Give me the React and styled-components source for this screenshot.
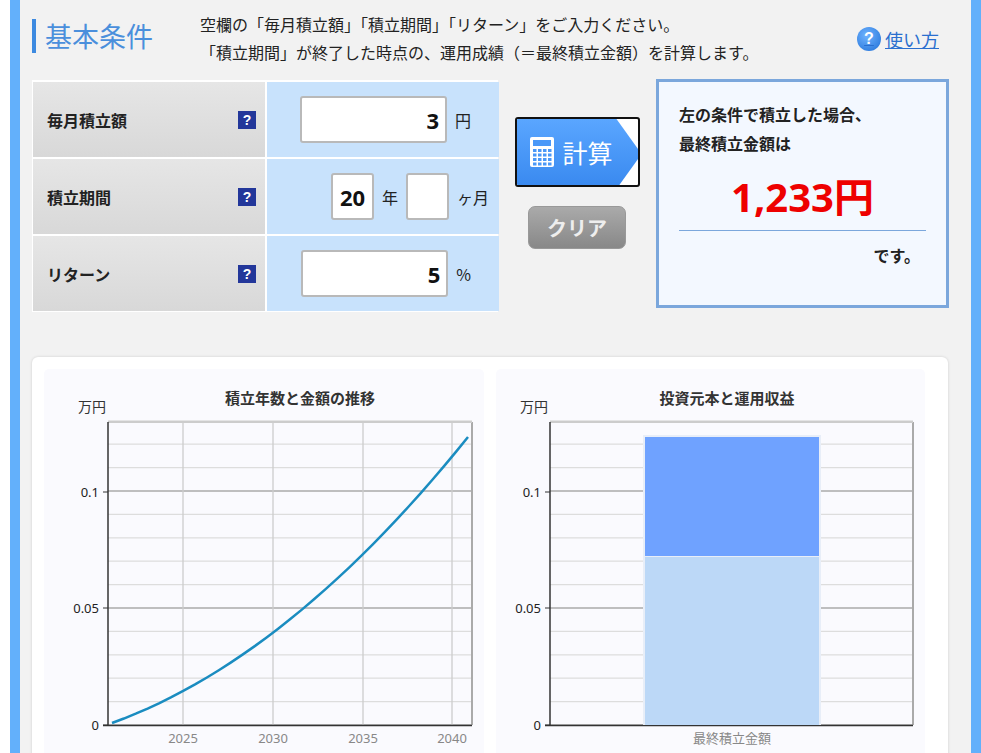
import React from "react";
import styled, { createGlobalStyle } from "styled-components";

const G = createGlobalStyle`
  html,body{margin:0;padding:0;background:#fff;}
  body{font-family:"Noto Sans CJK JP","Noto Sans",sans-serif;color:#222;}
`;
const Outer = styled.div`
  width:981px;height:753px;overflow:hidden;display:flex;background:#fff;
`;
const Page = styled.div`
  margin-left:10px;width:932px;border-left:10px solid #63b0fb;border-right:10px solid #63b0fb;
  background:#f2f2f2;padding:0 14px 0 12px;box-sizing:content-box;height:753px;
`;
const Head = styled.div`display:flex;align-items:flex-start;padding-top:10px;height:80px;box-sizing:border-box;`;
const Title = styled.h1`
  margin:9px 0 0;border-left:4px solid #3d8ae0;padding-left:9px;height:34px;line-height:34px;
  font-size:27px;font-weight:400;color:#4a8fdc;width:155px;
`;
const Desc = styled.div`font-size:16px;line-height:28px;color:#222;flex:1;`;
const Help = styled.a`
  margin-top:16px;margin-right:18px;display:flex;align-items:center;gap:4px;color:#2a6fcf;text-decoration:underline;font-size:18px;
`;
const HelpIcon = styled.span`
  width:24px;height:24px;border-radius:50%;background:radial-gradient(circle at 40% 35%,#6fb3ff,#1f6fd6);
  color:#fff;font-weight:700;font-size:16px;display:flex;align-items:center;justify-content:center;font-family:"Liberation Sans",sans-serif;
`;
const Top = styled.div`display:flex;align-items:flex-start;height:277px;`;
const Table = styled.div`
  width:466px;display:grid;grid-template-columns:232px 232px;gap:2px;background:#fff;padding:2px 1px 3px 1px;box-sizing:border-box;height:232px;
`;
const Label = styled.div`
  background:linear-gradient(#e6e6e6,#d8d8d8);display:flex;align-items:center;justify-content:space-between;
  padding:0 9px 0 14px;font-weight:700;font-size:16px;height:75px;
`;
const Q = styled.span`
  width:18px;height:18px;background:#23379a;color:#fff;font-size:14px;font-weight:700;display:flex;align-items:center;justify-content:center;
  font-family:"Liberation Sans",sans-serif;
`;
const Value = styled.div`
  background:#c8e2fc;display:flex;align-items:center;justify-content:flex-end;gap:8px;font-size:16px;height:75px;
  padding-right:${p=>p.pr||28}px;
`;
const Input = styled.div`
  width:${p=>p.w}px;height:47px;box-sizing:border-box;border:2px solid #b9b9b9;border-radius:3px;background:#fff;
  display:flex;align-items:center;justify-content:${p=>p.center?"center":"flex-end"};padding-right:6px;padding-left:6px;
  font-family:"Noto Sans",sans-serif;font-size:22px;font-weight:700;color:#111;
`;
const Buttons = styled.div`width:158px;display:flex;flex-direction:column;align-items:center;padding-top:37px;`;
const Calc = styled.div`
  width:125px;height:70px;box-sizing:border-box;border:2px solid #111;border-radius:3px;background:#fff;position:relative;overflow:hidden;
`;
const CalcFill = styled.div`
  position:absolute;inset:0;background:linear-gradient(#5aa6ff,#3a8af0);
  clip-path:polygon(0 0,100px 0,125px 35px,100px 70px,0 70px);display:flex;align-items:center;gap:8px;padding-left:12px;
  color:#fff;font-size:25px;font-weight:400;
`;
const Clear = styled.div`
  margin-top:19px;width:98px;height:43px;border-radius:7px;background:linear-gradient(#aaa,#888);border:1px solid #999;box-sizing:border-box;
  color:#eee;font-size:20px;font-weight:700;display:flex;align-items:center;justify-content:center;
`;
const Result = styled.div`
  margin-top:-1px;width:293px;height:229px;box-sizing:border-box;border:3px solid #7ba7dc;background:#f3f8ff;padding:18px 20px 0 20px;
`;
const RText = styled.div`font-weight:700;font-size:16px;line-height:29px;`;
const Amount = styled.div`
  text-align:center;color:#ee0000;font-weight:700;font-size:40px;font-family:"Noto Sans","Noto Sans CJK JP",sans-serif;
  line-height:50px;margin-top:14px;padding-bottom:8px;border-bottom:1px solid #7ba7dc;
`;
const Desu = styled.div`text-align:right;font-weight:700;font-size:16px;margin-top:12px;padding-right:6px;`;
const Charts = styled.div`
  width:916px;height:420px;background:#fff;border-radius:6px;box-shadow:0 0 3px rgba(0,0,0,.15);
  display:flex;gap:12px;padding:12px 23px 0 12px;box-sizing:border-box;
`;
const ChartBox = styled.div`width:${p=>p.w}px;height:420px;background:#fafafe;border-radius:5px;`;

const FONT = '"Noto Sans","Noto Sans CJK JP",sans-serif';

function Grid({x0,x1,vx=[]}) {
  const els=[];
  for(let i=0;i<=13;i++){const y=725-i*23.4; els.push(<line key={"h"+i} x1={x0} x2={x1} y1={y} y2={y} stroke={i%5===0?"#aaa":"#ddd"} strokeWidth="1.3"/>);}
  vx.forEach((x,i)=>els.push(<line key={"v"+i} x1={x} x2={x} y1={422} y2={725} stroke="#ccc" strokeWidth="1.3"/>));
  return els;
}
function Axis({ox,x1}) {
  return <>
    <line x1={x1} x2={x1} y1={422} y2={725} stroke="#aaa" strokeWidth="2"/>
    <line x1={ox} x2={x1} y1={422} y2={422} stroke="#ccc" strokeWidth="2"/>
    <line x1={ox} x2={ox} y1={422} y2={726} stroke="#333" strokeWidth="1.5"/>
    <line x1={ox-5} x2={x1} y1={725.5} y2={725.5} stroke="#333" strokeWidth="1.5"/>
    {[[492,"0.1"],[608,"0.05"],[725,"0"]].map(([y,t])=><g key={t}>
      <line x1={ox-5} x2={ox} y1={y} y2={y} stroke="#333"/>
      <text x={ox-9} y={y+5} textAnchor="end" fontSize="13" fontFamily={FONT} fill="#222">{t}</text></g>)}
    <text x={ox-30} y={412} fontSize="14" fontFamily={FONT} fill="#333">万円</text>
  </>;
}

function ChartsSvg(){
  const pts=[];
  for(let i=0;i<=30;i++){const t=i/30;const x=112+t*(468-112);const v=0.45*t+0.55*t*t;pts.push(`${x},${723-v*(723-437)}`);}
  return <svg width="981" height="753" style={{position:"absolute",left:0,top:0,pointerEvents:"none"}}>
    <Grid x0={108} x1={472} vx={[183,273,363,452]}/>
    <Axis ox={108} x1={472}/>
    <polyline points={pts.join(" ")} fill="none" stroke="#1a8cc0" strokeWidth="2.5"/>
    {[[183,"2025"],[273,"2030"],[363,"2035"],[452,"2040"]].map(([x,t])=><text key={t} x={x} y={743} textAnchor="middle" fontSize="13" fontFamily={FONT} fill="#888">{t}</text>)}
    <text x={300} y={404} textAnchor="middle" fontSize="15" fontWeight="700" fontFamily={FONT} fill="#333">積立年数と金額の推移</text>
    <Grid x0={550} x1={913}/>
    <Axis ox={550} x1={913}/>
    <rect x={643} y={435} width={178} height={290} fill="#e8eef8"/>
    <rect x={645} y={437} width={174} height={119} fill="#6fa2ff"/>
    <rect x={645} y={557} width={174} height={168} fill="#bcd8f7"/>
    <text x={732} y={743} textAnchor="middle" fontSize="13" fontFamily={FONT} fill="#888">最終積立金額</text>
    <text x={727} y={404} textAnchor="middle" fontSize="15" fontWeight="700" fontFamily={FONT} fill="#333">投資元本と運用収益</text>
  </svg>;
}

export default function App(){
  return <Outer><G/>
    <Page>
      <Head>
        <Title>基本条件</Title>
        <Desc>空欄の「毎月積立額」「積立期間」「リターン」をご入力ください。<br/>「積立期間」が終了した時点の、運用成績（＝最終積立金額）を計算します。</Desc>
        <Help><HelpIcon>?</HelpIcon>使い方</Help>
      </Head>
      <Top>
        <Table>
          <Label>毎月積立額<Q>?</Q></Label>
          <Value><Input w={147}>3</Input>円</Value>
          <Label>積立期間<Q>?</Q></Label>
          <Value pr={10}><Input w={43} center>20</Input>年<Input w={43}/>ヶ月</Value>
          <Label>リターン<Q>?</Q></Label>
          <Value><Input w={147}>5</Input>%</Value>
        </Table>
        <Buttons>
          <Calc><CalcFill>
            <svg width="26" height="32" viewBox="0 0 26 32"><rect x="1" y="1" width="24" height="30" rx="2" fill="#fff"/><rect x="4" y="4" width="18" height="6" fill="#4a98f8"/>{[0,1,2,3].map(r=>[0,1,2,3].map(c=><rect key={r+"-"+c} x={4+c*5} y={13+r*4.5} width="3.5" height="3" fill="#4a98f8"/>))}</svg>
            計算</CalcFill></Calc>
          <Clear>クリア</Clear>
        </Buttons>
        <Result>
          <RText>左の条件で積立した場合、<br/>最終積立金額は</RText>
          <Amount>1,233円</Amount>
          <Desu>です。</Desu>
        </Result>
      </Top>
      <Charts>
        <ChartBox w={440}/>
        <ChartBox w={429}/>
      </Charts>
    </Page>
    <ChartsSvg/>
  </Outer>;
}
